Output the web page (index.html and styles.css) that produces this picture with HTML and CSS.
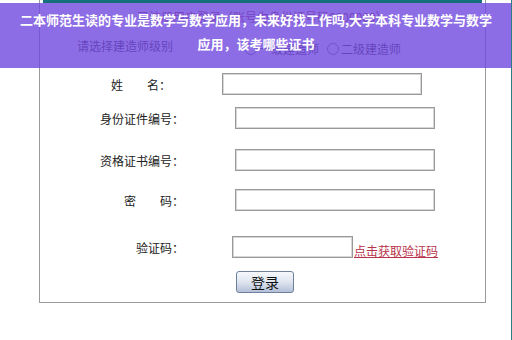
FILE: index.html
```html
<!DOCTYPE html>
<html lang="zh-CN">
<head>
    <meta charset="UTF-8">
    <title>二本师范生读的专业是数学与数学应用</title>
    <link rel="stylesheet" href="styles.css">
</head>
<body>
<div class="page">

    <!-- login box -->
    <div class="login-box">
        <div class="top-bar"></div>
        <p class="login-title">已注册用户登录（账号为身份证号码0000000）</p>

        <div class="level-row">
            <span class="level-label">请选择建造师级别</span>
            <span class="level-options">
                <span class="radio"></span>一级建造师
                <span class="radio second"></span>二级建造师
            </span>
        </div>

        <div class="form-row first">
            <label class="form-label short">姓　　名：</label>
            <input class="form-input" type="text">
        </div>
        <div class="form-row gap-12">
            <label class="form-label">身份证件编号：</label>
            <input class="form-input" type="text">
        </div>
        <div class="form-row gap-20">
            <label class="form-label">资格证书编号：</label>
            <input class="form-input" type="text">
        </div>
        <div class="form-row gap-18">
            <label class="form-label">密　　码：</label>
            <input class="form-input" type="password">
        </div>
        <div class="form-row gap-25">
            <label class="form-label">验证码：</label>
            <input class="form-input code" type="text">
            <a class="code-link" href="#">点击获取验证码</a>
        </div>
        <div class="button-row">
            <button class="login-button">登录</button>
        </div>
    </div>

    <!-- article title over the screenshot -->
    <div class="headline">
        二本师范生读的专业是数学与数学应用，未来好找工作吗,大学本科专业数学与数学<br>应用，该考哪些证书
    </div>
</div>
</body>
</html>
```

FILE: styles.css
```css
body {
    margin: 0;
    background-color: white;
    font-family: "Noto Sans CJK SC", "Noto Sans", sans-serif;
    color: #333333;
}

.page {
    position: relative;
    width: 511px;
    height: 340px;
    border-right: 1px solid #2a7d86;
    overflow: hidden;
}

.login-box {
    margin-left: 39px;
    width: 445px;
    height: 302px;
    border: 1px solid #9a9a9a;
    border-top: none;
}

.top-bar {
    height: 3px;
    margin: 0 3px;
    background-color: #16707c;
}

.login-title {
    margin: 6px 0 0 97px;
    font-size: 12px;
    line-height: 16px;
    color: #993344;
}

.level-row {
    display: flex;
    margin-top: 13px;
    height: 16px;
    font-size: 12px;
    line-height: 16px;
}

.level-label {
    margin-left: 37px;
    width: 168px;
}

.level-options {
    display: flex;
    align-items: center;
    padding-top: 5px;
}

.radio {
    width: 10px;
    height: 10px;
    border: 1px solid #777777;
    border-radius: 50%;
    margin-right: 2px;
}

.radio.second {
    margin-left: 8px;
}

.form-row {
    display: flex;
    align-items: center;
    height: 22px;
}

.form-row.first {
    margin-top: 19px;
}

.gap-12 {
    margin-top: 12px;
}

.gap-18 {
    margin-top: 18px;
}

.gap-20 {
    margin-top: 20px;
}

.gap-25 {
    margin-top: 25px;
}

.form-label {
    width: 144px;
    text-align: right;
    font-size: 12px;
    color: #222222;
}

.form-label.short {
    width: 131px;
}

.form-input {
    box-sizing: border-box;
    width: 200px;
    height: 22px;
    margin: 0 0 0 51px;
    padding: 0;
    border: 1px solid #999999;
    box-shadow: inset 0 0 0 1px #d6d6d6;
    background-color: white;
}

.form-input.code {
    width: 121px;
    margin-left: 48px;
}

.code-link {
    margin-left: 1px;
    padding-top: 6px;
    font-size: 12px;
    color: #b8324a;
}

.button-row {
    margin: 11px 0 0 196px;
}

.login-button {
    width: 58px;
    height: 22px;
    padding: 0;
    font-family: "Noto Sans CJK SC", sans-serif;
    font-size: 14px;
    line-height: 18px;
    color: #111111;
    border: 1px solid #6f7f9c;
    border-radius: 3px;
    background: linear-gradient(#f6f8fc, #dfe5f0 50%, #b4c0d8);
}

.headline {
    position: absolute;
    left: 0;
    top: 3px;
    width: 512px;
    height: 65px;
    padding-top: 5px;
    box-sizing: border-box;
    background-color: rgba(112, 72, 222, 0.8);
    color: white;
    font-weight: bold;
    font-size: 13px;
    line-height: 24px;
    text-align: center;
}
```
